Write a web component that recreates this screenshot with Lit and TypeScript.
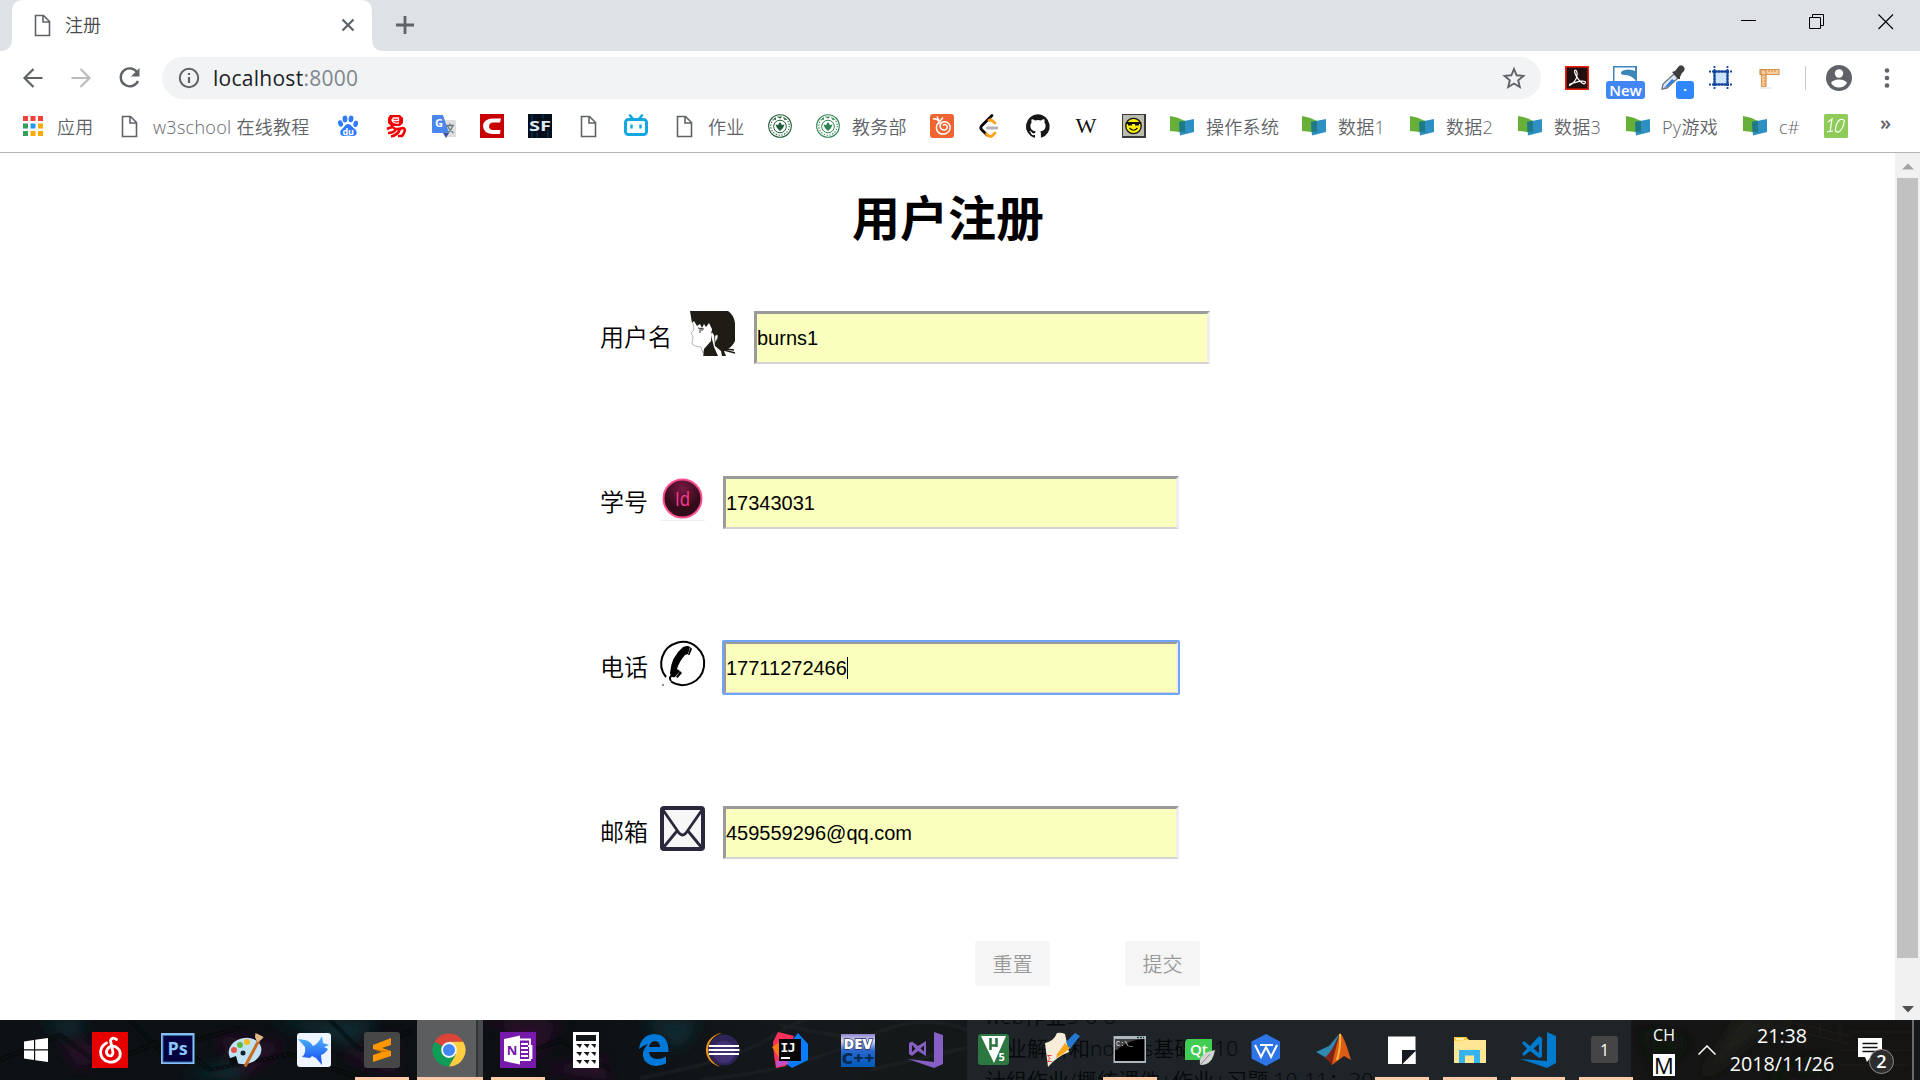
import { LitElement, html, svg, css } from "lit";
import { customElement, property } from "lit/decorators.js";

const page = svg`<path d="M5.500 2.500H13.500L19.500 8.500V22.500H5.500Z M13 3V9H19" fill="#fff" stroke="#5f6368" stroke-width="1.600"/>`;
const folder = svg`<path d="M0 2Q8 3 15 7V20Q8 17 0 17Z" fill="#67b037"/><path d="M9 8L24 5V18L10 21.500Z" fill="#2e8fc3"/><path d="M9 8L15 6.800V18.500L9.500 17.500Z" fill="#1f7a86"/>`;
const seal = (c: string) => svg`<circle cx="12" cy="12" r="11.300" fill="#fff" stroke="${c}" stroke-width="1.100"/><circle cx="12" cy="12" r="9.200" fill="none" stroke="${c}" stroke-width="1.100" stroke-dasharray="1.300 1.600"/><circle cx="12" cy="12.500" r="6.300" fill="none" stroke="${c}"/><path d="M12 8L14 11L16.500 10.500L15 14L12 17L9 14L7.500 10.500L10 11Z" fill="${c}"/><path d="M6 5h2M11 3.500h2M16 5h2" stroke="${c}" stroke-width="1.600"/>`;

const marks: Record<string, unknown> = {
  apps: svg`<g><path fill="#f44336" d="M2 2h5v5H2zM9.500 2h5v5h-5zM17 2h5v5h-5z"/><path fill="#34a05a" d="M2 9.500h5v5H2zM2 17h5v5H2z"/><path fill="#2196f3" d="M9.500 9.500h5v5h-5z"/><path fill="#fbab00" d="M17 9.500h5v5h-5zM9.500 17h5v5h-5zM17 17h5v5h-5z"/></g>`,
  page,
  folder,
  baidu: svg`<g fill="#2f7bff"><ellipse cx="4.500" cy="9.500" rx="2.400" ry="3.300" transform="rotate(-15 4.500 9.500)"/><ellipse cx="9" cy="5" rx="2.400" ry="3.400"/><ellipse cx="15" cy="5" rx="2.400" ry="3.400" transform="rotate(8 15 5)"/><ellipse cx="19.700" cy="9.800" rx="2.300" ry="3.200" transform="rotate(15 19.700 9.800)"/><path d="M12 10C9.500 10 8.500 13 6 15C3 17.500 4 22 7.500 22C9 22 10.500 21.600 12 21.600S16 22.300 18 22C21 21.500 22 17.500 18.500 14.800C16 13 15 10 12 10Z"/></g><text x="12.200" y="20.500" font-size="9" font-weight="700" text-anchor="middle" fill="#fff">du</text>`,
  yi: svg`<path d="M6 1H16L19 4V9L16 12H7L4 9V4Z" fill="#f50000"/><path d="M8 6.500H14.500V4H9.500L8 6Q8 9.500 15 9" fill="none" stroke="#fff" stroke-width="1.300"/><path d="M3 15Q9 12 10 14T19 14Q22 15 20 19L18 22H14M12 15Q10 19 4 19M16 15Q14 21 7 22.500" fill="none" stroke="#f50000" stroke-width="2.600"/>`,
  translate: svg`<path d="M10 6H22.500Q24 6 24 7.500V23H14Z" fill="#dedede"/><path d="M0 2Q0 1 1 1H11L17 19H1Q0 19 0 18Z" fill="#4a86ee"/><path d="M11 19H17L14 24Z" fill="#3c50a8"/><text x="3" y="13" font-size="11" font-weight="700" fill="#fff">G</text><path d="M14 11.500h8M18 9.500v2M20.500 12Q19 17 15 19M15.500 12Q17 16 21.500 19" fill="none" stroke="#687c82" stroke-width="1.300"/>`,
  c: svg`<path d="M0 0H24V24H0Z" fill="#c90000"/><path d="M21 4.500H12Q3.500 5 3 12Q3.500 19.500 12 20H20L20.500 16H13Q9 16 9 12Q9.500 8.500 13 8.500H20Z" fill="#fff"/>`,
  sf: svg`<path d="M0 0H24V24H0Z" fill="#050d1c"/><path d="M4 0v24M9 18v6M15 0v5M20 16v8" stroke="#06405c" stroke-width="1"/><text x="12" y="16.500" font-size="14" font-weight="700" text-anchor="middle" textLength="22" lengthAdjust="spacingAndGlyphs" fill="#dfeaf2">SF</text>`,
  bili: svg`<path d="M6 1.500L9 5M18 1.500L15 5" stroke="#14a7df" stroke-width="2.600" stroke-linecap="round"/><rect x="1.500" y="5.500" width="21" height="15" rx="3" fill="#fff" stroke="#14a7df" stroke-width="3"/><path d="M7.500 10.500v4M16.500 10.500v4" stroke="#14a7df" stroke-width="2.400"/><path d="M5 21h3v1H5zM16 21h3v1h-3z" fill="#14a7df"/>`,
  seal: seal("#235c38"),
  seal2: seal("#2f8453"),
  peach: svg`<rect width="24" height="24" rx="3" fill="#f06432"/><path d="M9.500 8.500Q5 11 7 16.500Q10 21.500 16 19.500Q21 17 20 12Q18 7 13 8Q10 9 10 12.500Q11 16.500 15 16Q18 15 17 12Q15 9.500 13 11.500" fill="none" stroke="#fff" stroke-width="1.500"/><path d="M3 5Q7 4 9.500 8.500M7 2.500L9.500 8L13 3.500" fill="none" stroke="#fff" stroke-width="1.500"/>`,
  leet: svg`<g fill="none" stroke-linecap="round" stroke-width="2.800"><path d="M14 1.500L3.500 12Q2 14 3.500 15.500L9 21" stroke="#0a0a0a"/><path d="M17 9L14 6.500Q12.500 5.500 11 6.500M8.500 20Q11 23.500 14 22L17 19" stroke="#ffa116"/><path d="M9.500 14H19" stroke="#b3b3b3"/></g>`,
  github: svg`<path fill="#171515" d="M12 .3a12 12 0 0 0-3.800 23.400c.6.100.800-.300.800-.600v-2.100c-3.300.7-4-1.600-4-1.600-.5-1.400-1.300-1.800-1.300-1.800-1.100-.7.100-.7.100-.7 1.200.1 1.800 1.200 1.800 1.200 1.100 1.800 2.800 1.300 3.500 1 .1-.8.400-1.300.8-1.600-2.700-.3-5.500-1.300-5.500-5.900 0-1.300.5-2.400 1.200-3.200-.1-.3-.5-1.500.1-3.200 0 0 1-.3 3.300 1.200a11.500 11.500 0 0 1 6 0C17.300 4.900 18.300 5.200 18.300 5.200c.6 1.700.2 2.900.1 3.200.8.800 1.200 1.900 1.200 3.200 0 4.600-2.800 5.600-5.500 5.900.4.400.8 1.100.8 2.200v3.300c0 .3.200.7.800.6A12 12 0 0 0 12 .3"/>`,
  wiki: svg`<text x="12" y="19" font-family="Liberation Serif, serif" font-size="20" text-anchor="middle" textLength="21" lengthAdjust="spacingAndGlyphs" fill="#111">W</text>`,
  smile: svg`<path d="M0 0H24V24H0Z" fill="#3a3a3a"/><path d="M1 1H22V22H1Z" fill="#b9bcae"/><circle cx="11.500" cy="12" r="7.700" fill="#fff200" stroke="#111" stroke-width="1.300"/><path d="M4 9H19M6 10.500h4M13 10.500h4" stroke="#111" stroke-width="1.800"/><path d="M7.500 14Q11.500 18.500 15.500 14" fill="none" stroke="#111" stroke-width="1.200"/>`,
  lo: svg`<rect width="24" height="24" rx="1.500" fill="#8ecb58"/><path d="M4 8L8 5L6 18M3 18L9 17M20 6Q15 3 12 12Q10 19 14.500 18Q19 16 20.500 6" fill="none" stroke="#fff" stroke-width="1.200"/>`,
};

const tasks: Record<string, unknown> = {
  netease: svg`<path d="M0 0H36V36H0Z" fill="#e60000"/><path d="M24.500 7.500Q20 4.500 18.500 8.500L21 20.500Q20.500 25 16.500 23.500Q13 21 15.500 17Q18 13.500 23 14.500Q29.500 17.500 28 24.500Q24.500 31 17 30Q8.500 28 8.500 19.500Q9.500 13.500 14.500 11" fill="none" stroke="#fff" stroke-width="2.800" stroke-linecap="round"/>`,
  ps: svg`<path d="M1 1H34.500V32H1Z" fill="#86bff5"/><path d="M3 3.500H32.500V30H3Z" fill="#06023f" stroke="#3d6da8"/><text x="17.500" y="22.500" font-size="18" font-weight="700" text-anchor="middle" fill="#8ac5fb">Ps</text>`,
  paint: svg`<ellipse cx="17" cy="19" rx="16.500" ry="13" fill="#bfe2f4" transform="rotate(-12 17 19)"/><path d="M0 27L8 24L10 31L4 34Z" fill="#090d12"/><circle cx="15" cy="21" r="2.500" fill="#16202a"/><circle cx="6" cy="18" r="3" fill="#e2564a"/><circle cx="12" cy="13" r="3" fill="#5fb740"/><circle cx="19" cy="10" r="3" fill="#f8b71c"/><path d="M31 8L17 34.500" stroke="#ca6c1f" stroke-width="3"/><path d="M29 10L27 5L27.500 1Q32 3 35.500 5Q34 8 29 10Z" fill="#dfb886"/>`,
  bird: svg`<defs><linearGradient id="bd" x2="0" y2="1"><stop stop-color="#4eb6ff"/><stop offset="1" stop-color="#1548f0"/></linearGradient></defs><rect x="1" y="1" width="34" height="34" rx="3" fill="#eff5ff"/><path d="M2 7L9 8Q14 9 17 14Q22 12 26 4L27 11L33 13L28 15L32 17Q29 22 25 23L26 33L20 26L16 24L14 26L6 25Q10 22 9 15Z" fill="url(#bd)"/>`,
  sublime: svg`<rect width="36" height="36" rx="3" fill="#474747"/><path d="M9 13L27 6V13L18 16L27 19V24L9 30V23L18 20L9 17Z" fill="#ff9800"/><path d="M9 17L27 19L18 20Z" fill="#d97500"/>`,
  chrome: svg`<path d="M18 18L3.700 9.700A16.500 16.500 0 0 1 32.300 9.700H18Z" fill="#db4437"/><path d="M18 18L3.700 9.700A16.500 16.500 0 0 0 18 34.500L25 22Z" fill="#0f9d58"/><path d="M18 9.700H32.300A16.500 16.500 0 0 1 18 34.500L25 22Z" fill="#ffcd40"/><circle cx="18" cy="18" r="7.900" fill="#f5f5f5"/><circle cx="18" cy="18" r="6" fill="#4285f4"/>`,
  onenote: svg`<path d="M0 0H36V36H0Z" fill="#7719aa"/><path d="M4 7L20 3.500V32.500L4 29Z" fill="#fff"/><path d="M20 7.500H30V28H20M21 12h7M21 16h7M21 20h7M21 24h7M28 14h3.500V27" fill="none" stroke="#fff" stroke-width="1.800"/><text x="12" y="22.500" font-size="13" font-weight="700" text-anchor="middle" fill="#7719aa">N</text>`,
  calc: svg`<path d="M5 0H31V36H5Z" fill="#fff"/><path d="M8 3H28V9H8ZM8 12h6l-2 4zM15.500 12h6l-2 4zM23 12h5l-1 4zM8 20h6l-2 4zM15.500 20h6l-2 4zM23 20h5l-1 4zM8 28h6l-2 4zM15.500 28h6l-2 4zM23 28h5l-1 4z" fill="#14171a"/>`,
  edge: svg`<path d="M3 17Q5 3 18 2Q33 2.500 32.500 20H13Q14 27 21 27Q26 27 30 24.500V31.500Q16 37.500 8.500 28.500Q3.500 20.500 12 12Q8 13 3 17ZM13 15H24Q24 9 18.500 9Q14 10 13 15Z" fill="#0078d7" fill-rule="evenodd"/>`,
  eclipse: svg`<path d="M18 1A18 17 0 0 0 16 34.500Q5 30 4 18Q5 5 18 1Z" fill="#f7941e"/><circle cx="20" cy="18" r="15.500" fill="#2f2457"/><circle cx="20" cy="20" r="11" fill="#433175"/><path d="M5 14H35M4.500 18H35.500M5 22H35" stroke="#fff" stroke-width="2"/>`,
  ij: svg`<path d="M1 10L6 0L22 4L14 34L4 36L2 23Z" fill="#fe315d"/><path d="M0 15L8 10V27Z" fill="#f97a12"/><path d="M22 6L26 1L36 12V28L20 36L12 30Z" fill="#087cfa"/><path d="M4 29L14 26L17 32L4 35Z" fill="#c44fc0"/><path d="M7 7H29V29H7Z" fill="#050505"/><text x="8.500" y="19.500" font-family="DejaVu Sans Mono, monospace" font-size="13" font-weight="700" fill="#fff" textLength="15">IJ</text><path d="M9 25h9v2H9z" fill="#fff"/>`,
  dev: svg`<defs><linearGradient id="dv" x2="0" y2="1"><stop stop-color="#8a82c8"/><stop offset=".2" stop-color="#dadaf5"/><stop offset=".5" stop-color="#2a68ce"/><stop offset="1" stop-color="#005cb9"/></linearGradient></defs><path d="M1 2H35V35H1Z" fill="url(#dv)"/><text x="18" y="16.500" font-size="14" font-weight="800" text-anchor="middle" textLength="29" lengthAdjust="spacingAndGlyphs" stroke="#25336e" stroke-width="1.500" paint-order="stroke" fill="#fff">DEV</text><text x="18" y="32" font-size="15" font-weight="800" text-anchor="middle" textLength="33" lengthAdjust="spacingAndGlyphs" fill="#052a55">C++</text>`,
  vs: svg`<path d="M26 0L35 3V32L26 36L0 27L26 30Z" fill="#865fc5"/><path d="M1 11L4 9.500L10 14L18 9V24L10 19L4 24L1 22ZM4 13V20L7.500 16.700ZM12.500 16.500L16 19.500V13.500Z" fill="#865fc5" fill-rule="evenodd"/>`,
  hb: svg`<rect x="2" y="2" width="31" height="31" rx="3" fill="#2c7840"/><path d="M5 4H30L18 31Z" fill="#fff"/><path d="M14.500 6V18M20.500 6V15M14 13.500H21" stroke="#2c7840" stroke-width="2.600"/><path d="M22 22H32V32H22Z" fill="#2c7840"/><text x="22.500" y="29" font-size="11" font-weight="700" fill="#fff">5</text>`,
  feather: svg`<path d="M1 11Q10 9 13 1Q17 0 21 2L25 20Q12 25 4 35Z" fill="#f7ecd9"/><path d="M22 10L31 1L36 4L26 17Z" fill="#2579d0"/><path d="M13 22L21 11L26 16L19 22L12 26Z" fill="#f5a91c"/><text x="3" y="30" font-size="9" fill="#df2525">Σ</text>`,
  cmd: svg`<path d="M1.500 4H34V31H1.500Z" fill="#aeb7bd"/><path d="M3 7H32.500V29H3Z" fill="#000"/><path d="M3 7H32Q15 8 5 18H3Z" fill="#414141"/><path d="M25 5.500h7" stroke="#244" stroke-width="1.500" stroke-dasharray="2 1"/><text x="4" y="14" font-family="Liberation Mono, monospace" font-size="7" fill="#fff">C:\\_</text>`,
  qt: svg`<path d="M7 7H32V28H5V10Z" fill="#41cd52"/><text x="10" y="23" font-size="15" font-weight="600" fill="#fff">Qt</text><path d="M35 18Q32 34 20 33Q18 21 35 18Z" fill="#d4d4d4"/><path d="M20 33L30 22" stroke="#888"/>`,
  wps: svg`<path d="M18 2L32 9.500V26.500L18 34L3.500 26.500V9.500Z" fill="#2d74e7"/><path d="M7 13L13 25L18 15L23 25L29 13M12 13H25" fill="none" stroke="#fff" stroke-width="2.100"/>`,
  matlab: svg`<path d="M0 20L13 14L24 1L12 27L7 24Z" fill="#2f88b2"/><path d="M24 1Q28 4 35 28L28 24L16 33L12 24Q18 19 24 1Z" fill="#dc5b15"/><path d="M24 1Q18 22 16 33Q12 28 9 26Q18 17 24 1Z" fill="#802215"/><path d="M24 2Q25 15 21 28" stroke="#ffb53f" stroke-width="2" fill="none"/>`,
  sticky: svg`<path d="M4 4.500H31.500V32H4Z" fill="#fff"/><path d="M18 18H31.500V19L19 31.500V32H18Z" fill="#151a20"/><path d="M20 32L31.500 20V32Z" fill="#fff"/>`,
  files: svg`<path d="M2 5H14L17 8H34V31H2Z" fill="#ffe694"/><path d="M2 5H14L16 8L2 9Z" fill="#ffcd32"/><path d="M4 7h8" stroke="#fff" stroke-width="1.200"/><path d="M7 18H28V31H22V23.500H13V31H7Z" fill="#35b3ed"/>`,
  code: svg`<path d="M27 0L36 4V31L27 36L0 27L27 29Z" fill="#007acc"/><path d="M2 11L4 9L10 14L19 4L22 6V25L19 26L10 19L4 24L2 22L7 16.500ZM13.500 16.500L19 21V12Z" fill="#007acc" fill-rule="evenodd"/>`,
  one: svg`<rect x="3" y="4" width="27" height="27" rx="3" fill="#454545"/><text x="16.500" y="23.500" font-size="16" text-anchor="middle" fill="#fff">1</text>`,
};

const extensions: Record<string, unknown> = {
  pdf: svg`<path d="M.800.800H23.200V23.200H.800Z" fill="#21100f" stroke="#f21d08" stroke-width="1.600"/><path d="M5 19Q8 18 11 13Q13 8 11.500 5Q9.500 3 9.500 6Q12 13 17 17Q20 19 20.500 16.500Q20 13 5 18Q3.500 20 6 19" fill="none" stroke="#fff" stroke-width="1.200"/>`,
  s: svg`<path d="M0 0H24V24H0Z" fill="#3c87b8"/><path d="M1.500 1.500H22V5Q15 2 9 5Q6 8 11 9Q19 9 22.500 14V24H1.500Z" fill="#fff"/><path d="M10 6Q18 2 22.500 6V14Q17 8 10 8Z" fill="#3c87b8"/>`,
  dropper: svg`<path d="M13 8L17 12L6 22L1 23L2 18Z" fill="#dcebfb" stroke="#74797f" stroke-width="1.400"/><path d="M11 13L14 15L6 21L3 22Z" fill="#377ee0"/><path d="M11 6L14 5L18 0Q21-2 23 1Q25 4 21 7L19 11V13H17Z" fill="#3f3f3f"/>`,
  grid: svg`<path d="M5.500 5.500H18.500V18.500H5.500Z" fill="#cde4fd"/><path d="M5.500 4V20M18.500 4V20M4 5.500H20M4 18.500H20" stroke="#12479b" stroke-width="2"/><path d="M5.500 0V24M18.500 0V24M0 5.500H24M0 18.500H24" stroke="#12479b" stroke-width="1.800" stroke-dasharray="2 1"/>`,
  ruler: svg`<path d="M3 3.500H22V8.500H9V20.500H4.500V8.500H3Z" fill="#f8cf9c" stroke="#d8954f" stroke-width="1.200"/><path d="M4 4h5v5H4zM12 3.500v2.500M15 3.500v2.500M18 3.500v2.500M6.500 12h2.500M6.500 15h2.500M6.500 18h2.500" fill="none" stroke="#cd8740"/><path d="M3 22H15" stroke="#ddd"/>`,
};

@customElement("ui-glyph")
class UiGlyph extends LitElement {
  @property() name = "";
  @property() set = "marks";
  static styles = css`
    :host { display: block; flex: none; width: 24px; height: 24px; }
    :host([set="tasks"]) { width: 36px; height: 36px; }
    .art { display: block; width: 100%; height: 100%; overflow: visible; font-family: "Open Sans", "Noto Sans", sans-serif; }
  `;
  render() {
    const group = this.set === "tasks" ? tasks : this.set === "extensions" ? extensions : marks;
    const box = this.set === "tasks" ? "0 0 36 36" : "0 0 24 24";
    return html`<svg class="art" viewBox=${box}>${group[this.name]}</svg>`;
  }
}

@customElement("browser-chrome")
class BrowserChrome extends LitElement {
  static styles = css`
    :host { display: block; font-family: "Open Sans", "Noto Sans CJK SC", sans-serif; color: #5f6368; }
    svg { display: block; flex: none; overflow: visible; }
    .tabs { display: flex; height: 51px; background: #dee1e6; }
    .tab { display: flex; align-items: center; width: 384px; height: 51px; flex: none; position: relative; box-sizing: border-box; padding-bottom: 2px; }
    .shape { position: absolute; left: 0; top: 0; }
    .tab .doc { margin-left: 30px; z-index: 1; }
    .title { z-index: 1; margin-left: 11px; padding-top: 1px; font-size: 18px; line-height: 26px; color: #45494d; flex: 1; font-weight: 350; }
    .close { z-index: 1; margin-right: 29px; }
    .plus { margin: 16px 0 0 12px; }
    .window { display: flex; gap: 53px; margin: 14px 26px 0 auto; height: 16px; }
    .toolbar { display: flex; align-items: center; height: 54px; padding-left: 22px; background: #fff; }
    .nav { display: flex; gap: 24px; width: 140px; }
    .omni { display: flex; align-items: center; width: 1379px; height: 42px; border-radius: 21px; background: #f1f3f4; box-sizing: border-box; padding: 0 15px 0 16px; }
    .url { flex: 1; margin-left: 13px; font-size: 21px; letter-spacing: .27px; line-height: 30px; color: #202124; }
    .port { color: #80868b; }
    .ext { display: flex; align-items: center; gap: 24px; margin-left: 24px; position: relative; }
    .badge { position: absolute; top: 15px; height: 18px; border-radius: 3px; background: #4285f4; color: #fff; font: 600 15px/18px "Open Sans", sans-serif; text-align: center; }
    .new { left: 41px; width: 39px; }
    .dot { left: 111px; width: 18px; background: #2f86ff; line-height: 17px; }
    .rule { width: 1px; height: 24px; margin-left: 24px; background: #c8cacd; }
    .account { margin-left: 20px; }
    .more { margin-left: 32px; }
    .bookmarks { display: flex; align-items: flex-start; height: 48px; padding-left: 21px; background: #fff; border-bottom: 1px solid #b4b5b7; box-sizing: border-box; }
    .mark { display: flex; align-items: center; gap: 12px; flex: none; height: 42px; }
    .label { font-size: 18px; line-height: 26px; letter-spacing: .3px; white-space: nowrap; padding-top: 1px; font-weight: 350; }
    .over { font-size: 20px; font-weight: 600; line-height: 20px; margin: 8px 0 0 22px; }
  `;
  private marks: [string, string, number][] = [
    ["apps", "应用", 96], ["page", "w3school 在线教程", 219], ["baidu", "", 48], ["yi", "", 48], ["translate", "", 48],
    ["c", "", 48], ["sf", "", 48], ["page", "", 48], ["bili", "", 48], ["page", "作业", 96], ["seal", "", 48],
    ["seal2", "教务部", 114], ["peach", "", 48], ["leet", "", 48], ["github", "", 48], ["wiki", "", 48], ["smile", "", 48],
    ["folder", "操作系统", 132], ["folder", "数据1", 108], ["folder", "数据2", 108], ["folder", "数据3", 108],
    ["folder", "Py游戏", 117], ["folder", "c#", 81], ["lo", "", 34],
  ];
  render() {
    return html`
      <div class="tabs">
        <div class="tab">
          <svg class="shape" width="384" height="51"><path d="M0 51Q12 51 12 39V12Q12 0 24 0H360Q372 0 372 12V39Q372 51 384 51Z" fill="#fff"/></svg>
          <svg class="doc" width="24" height="24" viewBox="0 0 24 24">${page}</svg>
          <span class="title">注册</span>
          <svg class="close" width="14" height="14" viewBox="0 0 14 14"><path d="M1.500 1.500L12.500 12.500M12.500 1.500L1.500 12.500" stroke="#5f6368" stroke-width="2.200"/></svg>
        </div>
        <svg class="plus" width="18" height="18" viewBox="0 0 18 18"><path d="M9 0V18M0 9H18" stroke="#5f6368" stroke-width="2.800"/></svg>
        <div class="window">
          <svg width="16" height="16"><path d="M1 6.500H16" stroke="#000" stroke-width="1"/></svg>
          <svg width="16" height="16"><path d="M.500 3.500H11.500V14.500H.500ZM3.500 3V.500H14.500V11.500H12" fill="none" stroke="#000"/></svg>
          <svg width="16" height="16"><path d="M.500.500L15 15M15 .500L.500 15" stroke="#000" stroke-width="1.100"/></svg>
        </div>
      </div>
      <div class="toolbar">
        <div class="nav">
          <svg width="24" height="24" viewBox="0 0 24 24"><path d="M20.500 12H3M11.500 3L2.500 12L11.500 21" fill="none" stroke="#5f6368" stroke-width="2.200"/></svg>
          <svg width="24" height="24" viewBox="0 0 24 24"><path d="M1.500 12H19M10.500 3L19.500 12L10.500 21" fill="none" stroke="#bbbdc0" stroke-width="2.200"/></svg>
          <svg width="24" height="24" viewBox="0 0 24 24"><path d="M19 6A9 9 0 1 0 20 15" fill="none" stroke="#5f6368" stroke-width="2.400"/><path d="M21.500 2V10.500H13Z" fill="#5f6368"/></svg>
        </div>
        <div class="omni">
          <svg width="22" height="22" viewBox="0 0 22 22"><circle cx="11" cy="11" r="9.200" fill="none" stroke="#5f6368" stroke-width="2"/><path d="M11 10V16M11 6V8" stroke="#5f6368" stroke-width="2.200"/></svg>
          <div class="url">localhost<span class="port">:8000</span></div>
          <svg width="24" height="24" viewBox="0 0 24 24"><path d="M12 3L14.600 9.300L21.400 9.900L16.200 14.400L17.800 21L12 17.500L6.200 21L7.800 14.400L2.600 9.900L9.400 9.300Z" fill="none" stroke="#5f6368" stroke-width="1.900"/></svg>
        </div>
        <div class="ext">
          ${["pdf", "s", "dropper", "grid", "ruler"].map((n) => html`<ui-glyph set="extensions" name=${n}></ui-glyph>`)}
          <span class="badge new">New</span><span class="badge dot">·</span>
        </div>
        <div class="rule"></div>
        <svg class="account" width="26" height="26" viewBox="0 0 26 26"><circle cx="13" cy="13" r="13" fill="#5f6368"/><circle cx="13" cy="8.500" r="4.200" fill="#fff"/><path d="M5 18Q7 14.500 13 14.500T21 18Q18 22.500 13 22.500T5 18Z" fill="#fff"/></svg>
        <svg class="more" width="6" height="22"><circle cx="3" cy="3.500" r="2.300" fill="#5f6368"/><circle cx="3" cy="11" r="2.300" fill="#5f6368"/><circle cx="3" cy="18.500" r="2.300" fill="#5f6368"/></svg>
      </div>
      <div class="bookmarks">
        ${this.marks.map(([icon, text, width]) => html`<div class="mark" style="width:${width}px"><ui-glyph name=${icon}></ui-glyph>${text ? html`<span class="label">${text}</span>` : ""}</div>`)}
        <span class="over">»</span>
      </div>`;
  }
}

@customElement("register-form")
class RegisterForm extends LitElement {
  static styles = css`
    :host { display: flex; height: 867px; background: #fff; color: #000; font-family: "Open Sans", "Noto Sans CJK SC", sans-serif; }
    .page { flex: 1; display: flex; flex-direction: column; padding-left: 600px; box-sizing: border-box; }
    h1 { margin: 29px 0 0 252px; font-size: 48px; line-height: 72px; height: 72px; font-weight: 700; }
    .fields { display: flex; flex-direction: column; gap: 112px; margin-top: 57px; }
    .field { display: flex; height: 53px; }
    .name { font-size: 24px; line-height: 36px; padding-top: 8px; font-weight: 350; }
    .pic { display: block; width: 45px; height: 45px; margin: 0 18px 0 12px; overflow: visible; }
    .wide .pic { margin-left: 18px; margin-right: 19px; }
    .box { display: flex; align-items: center; box-sizing: border-box; width: 456px; height: 53px; border: 3px solid; border-color: #9a9a9a #eee #d2d2d2 #9a9a9a; border-bottom-width: 2px; background: #faffbd; font: 20px/24px "Liberation Sans", Arial, sans-serif; }
    .focus { outline: 2px solid #6fa4f8; outline-offset: -1px; border-radius: 1px; }
    .caret { width: 1px; height: 22px; background: #000; }
    .actions { display: flex; gap: 75px; margin: 82px 0 0 375px; }
    .btn { width: 75px; height: 45px; border: 0; border-radius: 3px; background: #f5f5f5; color: #999; font: 350 20px/30px "Noto Sans CJK SC", sans-serif; padding: 0; }
    .scroll { width: 25px; background: #f1f1f1; display: flex; flex-direction: column; align-items: center; }
    .thumb { width: 21px; height: 780px; margin-top: 8px; background: #c1c1c1; }
    .up { margin-top: 10px; }
    .down { margin-top: 48px; }
  `;
  private pics = {
    girl: svg`<path d="M0 0H38Q44 4 45 12V30Q42 37 34 40L36 45H32L31 40L25 35L24 24L21 20L22 28L24 36L28 45H13L14 38L21 30L22 18L19 12L16 16L14 13L12 17L10 13L7 15L4 10L2 12Z" fill="#1f1b15"/><path d="M3 12L4 19L1 22L3 25L2 33Q5 36 11 36L14 45" fill="none" stroke="#999" stroke-width=".7"/><path d="M8 17L14 18M10 18v4M12 18v2" stroke="#333"/><path d="M25 25Q29 22 27 28L25 31Z" fill="#fff" stroke="#999" stroke-width=".6"/><path d="M34 39L45 42M36 38L44 39" stroke="#1f1b15" stroke-width="1.400"/>`,
    id: svg`<defs><radialGradient id="g" cy=".25"><stop stop-color="#791943"/><stop offset="1" stop-color="#330c1c"/></radialGradient></defs><circle cx="22.500" cy="22.500" r="19" fill="url(#g)" stroke="#ff4f91" stroke-width="2"/><text x="22.500" y="29.500" font-size="20" text-anchor="middle" textLength="15" lengthAdjust="spacingAndGlyphs" fill="#ff3c8d">Id</text><path d="M1 44.500H45" stroke="#eee"/>`,
    phone: svg`<g transform="translate(-1 -1)"><path d="M7 37A21.500 21.500 0 1 1 12 41.500M14 35Q9 37 12 41" fill="none" stroke="#000" stroke-width="2"/><path d="M24 7Q29 5 31 7L29 14L26 15Q20 22 18 29L21 31L16 37Q12 38 11 33Q12 17 24 7Z"/><path d="M31.500 7L33 9L30.500 15L29 15ZM21 31L23 33L18.500 38L17 37Z"/><circle cx="4" cy="45" r=".8"/></g>`,
    mail: svg`<rect x="2" y="2" width="41" height="41" rx="2" fill="#f7f7f8" stroke="#29293b" stroke-width="4"/><path d="M3 4L19 27Q22.500 31 26 27L42 4M3 42L17 25M42 42L28 25" fill="none" stroke="#29293b" stroke-width="2.800"/>`,
  };
  render() {
    const row = (name: string, pic: unknown, value: string, mods = "", focus = false) => html`
      <div class="field ${mods}">
        <label class="name">${name}</label>
        <svg class="pic" viewBox="0 0 45 45">${pic}</svg>
        <div class="box ${focus ? "focus" : ""}">${value}${focus ? html`<span class="caret"></span>` : ""}</div>
      </div>`;
    return html`
      <div class="page">
        <h1>用户注册</h1>
        <div class="fields">
          ${row("用户名", this.pics.girl, "burns1", "wide")}
          ${row("学号", this.pics.id, "17343031")}
          ${row("电话", this.pics.phone, "17711272466", "", true)}
          ${row("邮箱", this.pics.mail, "459559296@qq.com")}
        </div>
        <div class="actions"><button class="btn">重置</button><button class="btn">提交</button></div>
      </div>
      <div class="scroll">
        <svg class="up" width="12" height="7"><path d="M0 6.500L6 .500L12 6.500Z" fill="#a3a3a3"/></svg>
        <div class="thumb"></div>
        <svg class="down" width="12" height="7"><path d="M0 0H12L6 6.500Z" fill="#505050"/></svg>
      </div>`;
  }
}

@customElement("task-bar")
class TaskBar extends LitElement {
  static styles = css`
    :host { display: flex; height: 60px; position: relative; overflow: hidden; background: #0c1013; color: #fff; font-family: "Open Sans", "Noto Sans", sans-serif; }
    .photo { position: absolute; inset: 0; }
    .pane { position: absolute; left: 967px; top: 0; width: 664px; height: 60px; background: #1e2428; overflow: hidden; color: #060809; font: 350 21px/32px "Open Sans", "Noto Sans CJK SC", sans-serif; white-space: nowrap; }
    .line { height: 32px; }
    .lines { margin-top: -20px; padding-left: 18px; }
    .start, .slots, .tray { z-index: 1; display: flex; }
    .start { width: 76px; flex: none; padding: 18px 0 0 24px; box-sizing: border-box; }
    .slots { flex: none; width: 1564px; }
    .slot { width: 68px; height: 60px; flex: none; display: flex; justify-content: center; padding-top: 12px; box-sizing: border-box; position: relative; }
    .run::after { content: ""; position: absolute; left: 7px; bottom: 0; width: 54px; height: 3px; background: #ffccaa; }
    .active { background: linear-gradient(90deg, transparent 0 1px, #5b5d5e 1px 60px, #303538 60px 62px, #464a4c 62px 67px, transparent 67px); }
    .active ui-glyph { margin-right: 3px; }
    .active::after { left: 1px; width: 66px; }
    .tray { flex: 1; }
    .ime { display: flex; flex-direction: column; align-items: center; margin-left: 13px; width: 22px; }
    .lang { font-size: 16px; line-height: 20px; margin-top: 5px; }
    .mode { width: 22px; height: 22px; margin-top: 9px; background: #fff; color: #000; font: 22px/22px "Open Sans", sans-serif; text-align: center; }
    .chev { margin: 25px 0 0 23px; }
    .clock { width: 110px; margin-left: 11px; text-align: center; font-size: 19.700px; line-height: 28px; padding-top: 2px; white-space: nowrap; }
    .note { margin: 18px 0 0 21px; overflow: visible; font: 600 18px "Open Sans", sans-serif; }
    .peek { width: 8px; height: 60px; margin-left: auto; border-left: 2px solid #6b6b6b; box-sizing: border-box; background: #16191b; }
  `;
  private slotsData: [string, string][] = [
    ["netease", ""], ["ps", ""], ["paint", ""], ["bird", ""], ["sublime", "run"], ["chrome", "run active"], ["onenote", "run"],
    ["calc", ""], ["edge", ""], ["eclipse", ""], ["ij", ""], ["dev", ""], ["vs", ""], ["hb", ""], ["feather", ""], ["cmd", "run"],
    ["qt", ""], ["wps", ""], ["matlab", ""], ["sticky", "run"], ["files", "run"], ["code", "run"], ["one", "run"],
  ];
  render() {
    return html`
      <svg class="photo" width="1920" height="60">
        <defs>
          <filter id="soft" x="-20%" y="-50%" width="140%" height="200%"><feGaussianBlur stdDeviation="7"/></filter>
          <filter id="haze"><feGaussianBlur stdDeviation="1.200"/></filter>
          <linearGradient id="dusk"><stop stop-color="#0d1114"/><stop offset=".3" stop-color="#0c1012"/><stop offset=".42" stop-color="#15191b"/><stop offset="1" stop-color="#151413"/></linearGradient>
        </defs>
        <rect width="1920" height="60" fill="url(#dusk)"/>
        <g filter="url(#soft)">
          <path d="M40 0h50l-20 18zM270 0h110l-30 25zM180 55l60-15v20zM640 0h60l-20 30z" fill="#0d2a31"/>
          <path d="M60 20l50 8-30 22zM215 15l70 10-40 30zM345 35l50-20v40zM500 5l55 5-20 30zM540 50l60-15 10 25zM480 0h90l-40 15z" fill="#2b0f2b"/>
          <path d="M1640 10l50 10-30 35zM1760 60l60-25v25z" fill="#10160f"/>
          <path d="M1700 60L1760 10L1800 0H1740Z" fill="#24231f"/>
        </g>
        <g fill="none" stroke="#070809" stroke-width="2.500" filter="url(#haze)">
          <path d="M0 40L60 15L100 45L170 18L210 50L290 34L360 58M130 0L160 30L240 8M330 0L360 30L410 12"/>
          <path d="M500 45L560 20L610 50"/>
        </g>
        <g fill="none" stroke="#252a2d" stroke-width="3" opacity=".5" filter="url(#haze)"><path d="M640 58Q740 40 780 12T900 0M700 60Q800 50 860 20T967 10M780 5L850 18M870 50L965 28"/></g>
        <g stroke="#211e1c" stroke-width="1"><path d="M1770 5L1850 24M1780 0L1850 16M1800 0V10M1820 3V16M1840 6V20M1850 12H1910M1840 30H1910M1840 45H1910"/></g>
      </svg>
      <div class="pane"><div class="lines">
        <div class="line">web作业5-6-8</div>
        <div class="line">作业解析和nodejs基础 --10</div>
        <div class="line">计组作业/概统课件+作业+习题 10-11；30</div>
      </div></div>
      <div class="start"><svg width="24" height="24" viewBox="0 0 24 24"><path d="M0 3.500L10 2V11.300H0ZM11.200 1.800L24 0V11.300H11.200ZM0 12.500H10V22L0 20.500ZM11.200 12.500H24V24L11.200 22.200Z" fill="#fff"/></svg></div>
      <div class="slots">${this.slotsData.map(([n, c]) => html`<div class="slot ${c}"><ui-glyph set="tasks" name=${n}></ui-glyph></div>`)}</div>
      <div class="tray">
        <div class="ime"><span class="lang">CH</span><span class="mode">M</span></div>
        <svg class="chev" width="18" height="10"><path d="M.500 9.500L9 1L17.500 9.500" fill="none" stroke="#fff" stroke-width="1.500"/></svg>
        <div class="clock">21:38<br>2018/11/26</div>
        <svg class="note" width="38" height="38"><path d="M0 0H24V19H13L9 24L7 19H0Z" fill="#fff"/><path d="M4.500 5.500H19.500M4.500 9.500H19.500M4.500 13.500H19.500" stroke="#111" stroke-width="1.300"/><circle cx="23.500" cy="23.500" r="12" fill="#2c2c2c" stroke="#8b8b8b"/><text x="23.500" y="30" text-anchor="middle" fill="#fff">2</text></svg>
        <div class="peek"></div>
      </div>`;
  }
}

@customElement("app-root")
class AppRoot extends LitElement {
  static styles = css`
    :host { display: block; width: 1920px; height: 1080px; overflow: hidden; background: #fff; }
  `;
  render() {
    return html`<browser-chrome></browser-chrome><register-form></register-form><task-bar></task-bar>`;
  }
}
